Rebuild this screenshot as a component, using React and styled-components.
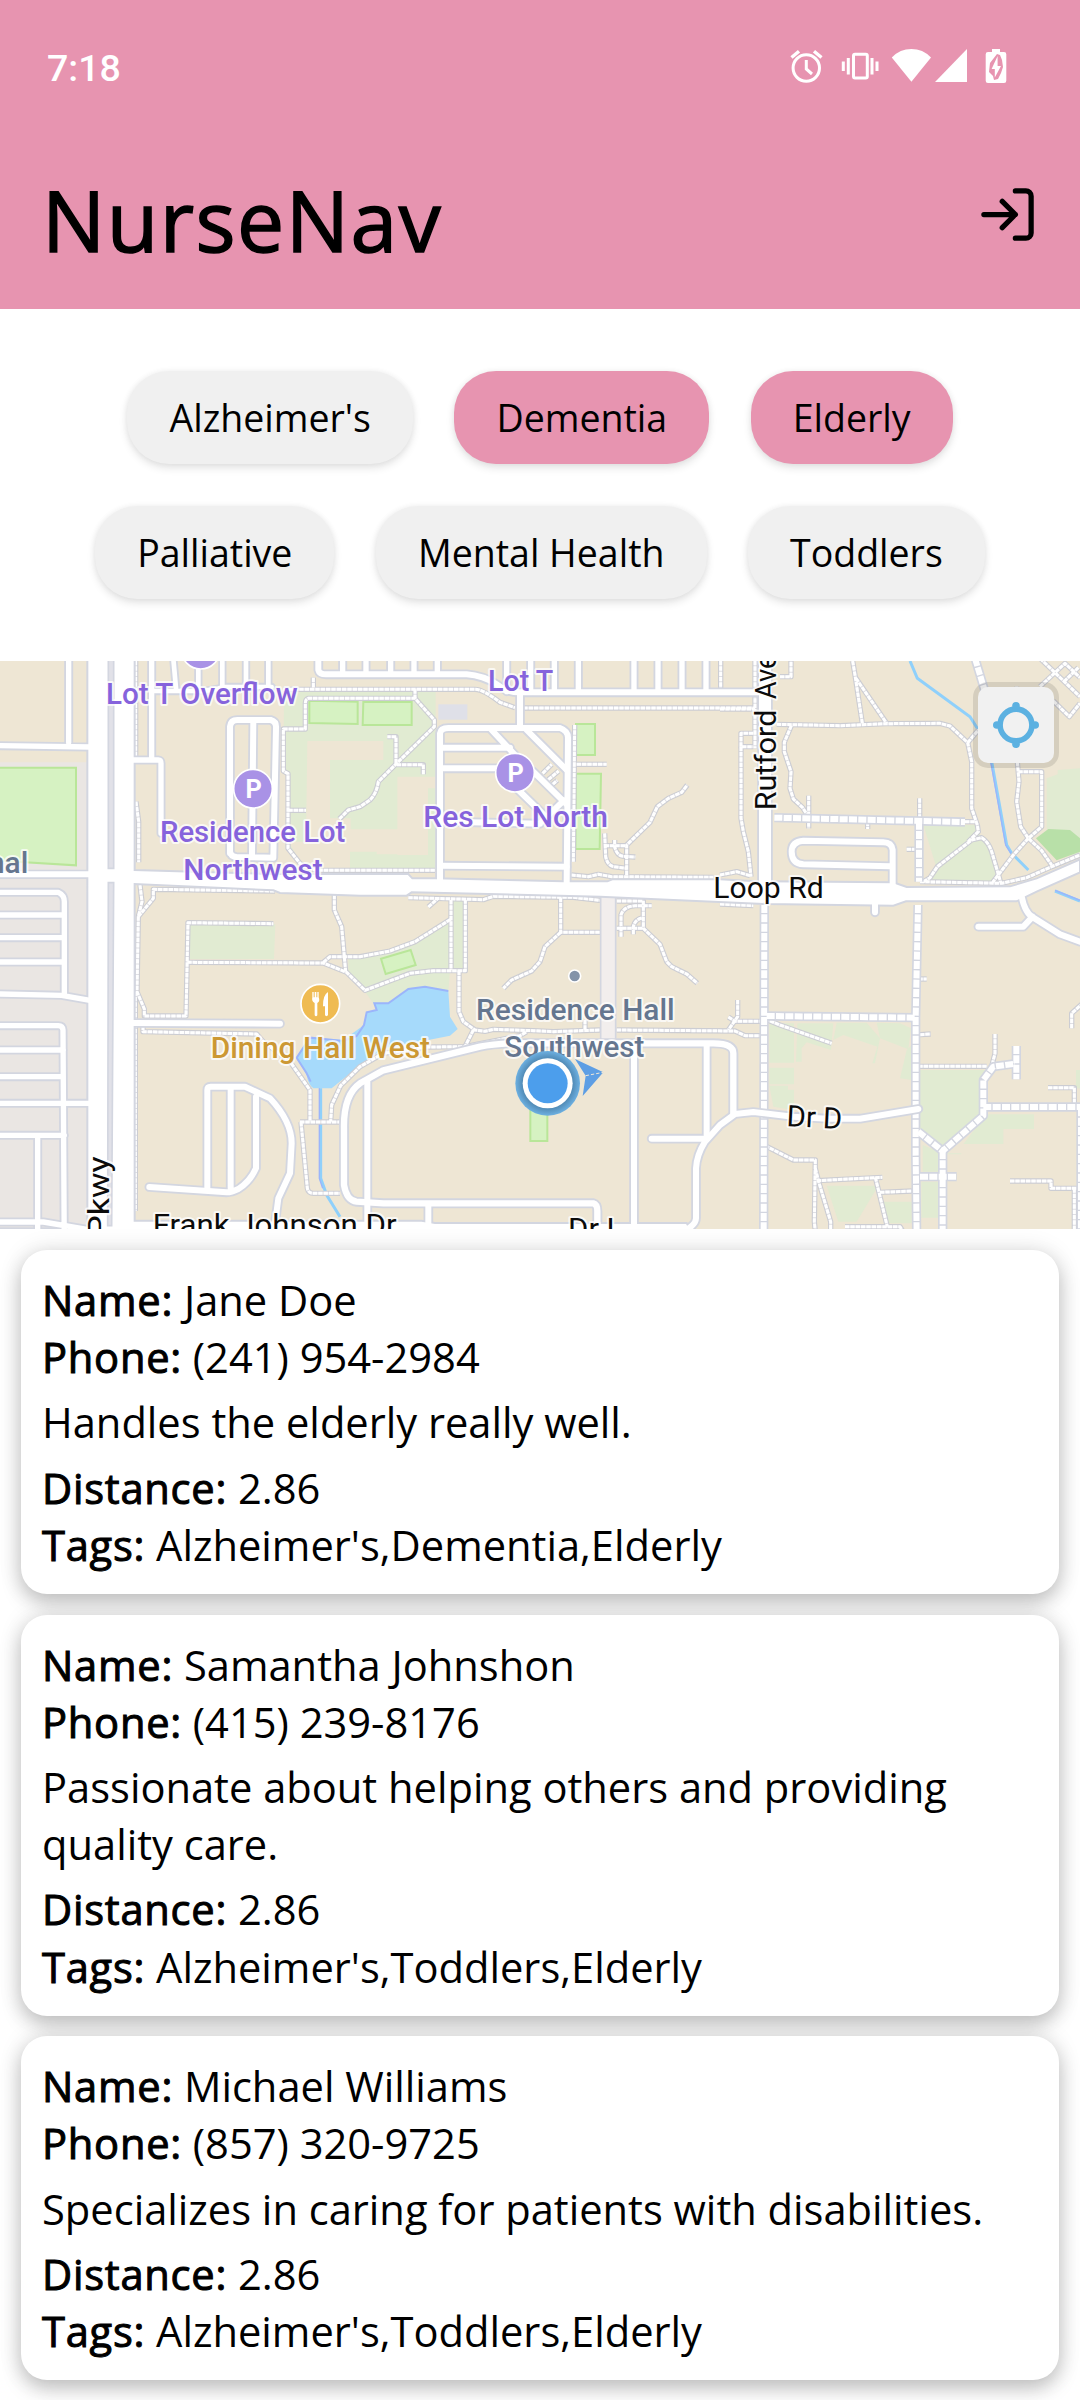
import React from 'react';
import styled, { createGlobalStyle } from 'styled-components';

const GlobalStyle = createGlobalStyle`
  * { box-sizing: border-box; }
  body { margin: 0; background: #fff; }
`;

const Screen = styled.main`
  width: 1080px;
  height: 2400px;
  overflow: hidden;
  display: flex;
  flex-direction: column;
  background: #fff;
  color: #000;
  font-family: 'Open Sans', 'Noto Sans', sans-serif;
`;

const Header = styled.header`
  height: 309px;
  flex: none;
  display: flex;
  flex-direction: column;
  background: #e794b0;
`;

const StatusBar = styled.div`
  height: 136px;
  display: flex;
  align-items: center;
  justify-content: space-between;
  padding: 0 72px 0 47px;
  color: #fff;
`;

const Clock = styled.time`
  font: 500 37.5px/44px Roboto, sans-serif;
`;

const StatusIcons = styled.svg`
  width: 220px;
  height: 40px;
  display: block;
  margin-top: -5px;
`;

const TitleRow = styled.div`
  flex: 1;
  display: flex;
  align-items: flex-start;
  justify-content: space-between;
  padding: 27px 41px 0 42px;
`;

const Title = styled.h1`
  margin: 0;
  font-size: 84px;
  line-height: 114px;
  font-weight: 400;
  letter-spacing: 1.5px;
  -webkit-text-stroke: 1.5px #000;
`;

const IconButton = styled.button`
  border: 0;
  padding: 0;
  margin-top: 20px;
  background: none;
  color: inherit;
  svg { display: block; }
`;

const Filters = styled.section`
  height: 352px;
  flex: none;
  display: flex;
  flex-direction: column;
  justify-content: center;
  padding-bottom: 1px;
  gap: 42px;
`;

const FilterRow = styled.div`
  display: flex;
  justify-content: center;
  gap: 41.5px;
`;

const Chip = styled.button`
  height: 93px;
  border: 0;
  border-radius: 42px;
  padding: 1px 42px 0;
  font: 400 37.5px/52px 'Open Sans', 'Noto Sans', sans-serif;
  color: #000;
  background: ${(p) => (p.$active ? '#e794b0' : '#f0f0f0')};
  box-shadow: 0 4px 8px rgba(0, 0, 0, 0.11), 0 0 6px rgba(0, 0, 0, 0.05);
`;

const MapPanel = styled.section`
  position: relative;
  height: 568px;
  flex: none;
  overflow: hidden;
`;

const MapDrawing = styled.svg`
  display: block;
  width: 1080px;
  height: 568px;
`;

const LocateButton = styled.button`
  position: absolute;
  top: 21px;
  right: 21px;
  width: 86px;
  height: 86px;
  padding: 0;
  border: 5px solid rgba(0, 0, 0, 0.1);
  border-radius: 15px;
  background: #f1f1f1;
  background-clip: padding-box;
  display: flex;
  align-items: center;
  justify-content: center;
`;

const NurseList = styled.section`
  display: flex;
  flex-direction: column;
  gap: 20.5px;
  padding: 21px;
`;

const Card = styled.article`
  padding: 21px;
  border-radius: 26px;
  background: #fff;
  font-size: 41.65px;
  line-height: 57.2px;
  box-shadow: 0 9px 20px rgba(0, 0, 0, 0.21), 0 0 24px rgba(0, 0, 0, 0.11);
`;

const Line = styled.div``;

const Label = styled.span`
  letter-spacing: 0.75px;
  -webkit-text-stroke: 1px #000;
`;

const Bio = styled.p`
  margin: 8px 0;
`;

const roads = [
  ['M206 0V262M0 272L270 276', 16],
  ['M455 0V315M398 315H475Q483 315 483 325V535', 16],
  ['M519 0L528 100M455 108H580Q640 108 670 96H815', 14],
  ['M595 0V100M667 0V95M738 0V92M805 0V92', 14],
  ['M955 0V45Q958 58 978 58H1400Q1450 62 1490 88Q1520 113 1560 112H2275', 18],
  ['M1028 0V55M1098 0V55M1172 0V55M1242 0V55M1312 -0V55', 16],
  ['M1520 0V110M1592 0V110M1663 0V110M1735 0V110M1902 0V110M1974 0V110M2046 0V110M2118 0V110', 16],
  ['M690 595V215Q692 195 712 195H812Q830 200 828 220L820 608L710 606Q692 605 690 590M760 195L756 600', 18],
  ['M1560 115V215M1320 690V235Q1322 219 1345 219H1680Q1705 228 1704 250L1700 690', 18],
  ['M1330 278H1530M1330 340H1500M1475 225L1545 300M1580 225L1700 345M1600 350L1700 448', 18],
  ['M1555 405L1630 478M1692 436L1625 500M1330 500L1620 506M1322 632L1700 635', 18],
  ['M0 712H175Q193 720 193 740V1015M0 780H190M0 848H190M0 921H190M0 1017L185 1021L270 1036', 16],
  ['M0 1112H175Q188 1112 189 1125L193 1800M0 1185H190M0 1265H190M0 1345H270M0 1441H193M113 1441V1800M0 1701H130L270 1725', 16],
  ['M398 1104L840 1106', 18],
  ['M622 1600V1305Q622 1295 632 1295H735L810 1330Q875 1400 875 1465L870 1555L835 1630L823 1720', 18],
  ['M692 1300V1600M768 1325V1540Q750 1580 715 1602Q695 1612 680 1612L448 1596', 18],
  ['M2200 1375V1195Q2200 1165 2140 1165H1600Q1500 1162 1440 1175L1150 1246L1080 1285Q1030 1320 1032 1420V1590Q1040 1637 1070 1640L1150 1645H1780Q1792 1648 1792 1668V1720', 19],
  ['M1102 1280V1740M1285 1650V1740M1902 1170V1740M2120 1170V1440M1955 1451H2120', 18],
  ['M2050 1730Q2088 1710 2088 1690V1540Q2090 1500 2115 1460L2160 1410L2205 1377L2260 1371L2380 1385L2480 1391H2580L2755 1362', 18],
  ['M2295 0V700', 36],
  ['M2678 700V585Q2675 562 2650 562L2410 557Q2375 560 2375 590Q2375 625 2410 628L2670 634M2625 740V772', 18],
  ['M3065 725Q3075 775 3100 788L3180 838L3240 860M2935 815H3070L3098 785', 18],
];

const promenades = [
  'M2293 750L2291 1740', 'M2754 750L2747 1090V1500L2750 1740', 'M2323 488L2895 501', 'M2757 500V680',
  'M2300 1083L2745 1088', 'M2755 1430L2828 1488L2950 1382V1275L2980 1235L3045 1226', 'M3049 1173V1273',
  'M2950 1356H3240', 'M2828 1488V1740', 'M2760 1565H2870', 'M3243 1360V1740', 'M2925 10L2955 110',
];

const footpaths = [
  'M407 18V310', 'M408 440L416 500V622', 'M406 1010V1668', 'M420 690L426 740L415 785L411 1010L433 1062V1083H558L564 803L820 806',
  'M415 785L460 730V703L825 708', 'M940 68V100', 'M850 103H1425Q1450 103 1500 142L1545 158', 'M1570 159H2265',
  'M1080 130H925Q916 132 916 145V222H850V348L864 356V580L900 625Q925 645 970 646H1305', 'M865 466H918',
  'M1018 492L1045 465L1080 455L1110 435Q1130 415 1135 380L1190 325L1303 215V195L1245 130H1080', 'M1245 103V130',
  'M1188 325V245H1162', 'M1190 329H1270V358', 'M1003 720V765L1025 815L1037 950',
  'M562 922L970 924L1040 952L1095 1006L1230 955L1300 947H1396V735', 'M970 922L990 905H1080L1170 888L1245 860L1352 793',
  'M1353 735V945', 'M1225 728L1450 734L1480 724L1720 727L1800 736', 'M1285 756L1312 732',
  'M1682 728V832H1800', 'M1682 832L1635 875L1620 920L1595 948L1535 975L1510 1000',
  'M1377 947V1070L1390 1100L1425 1125L1455 1129L1480 1123L1600 1127L1660 1130L1800 1125', 'M1420 1125L1395 1175L1280 1176',
  'M1395 1175L1560 1142L1580 1130', 'M1755 1095V1125', 'M1850 1125L2205 1128L2235 1142H2280', 'M2213 1035V1085L2185 1125', 'M2185 1086L2205 1099H2285',
  'M429 1112V1130L770 1137L790 1160L830 1190L870 1220L930 1305V1400', 'M1280 1176L1150 1195L1080 1235L1022 1292L995 1350L992 1400',
  'M900 1401H1020', 'M903 1401L922 1600Q925 1615 940 1615H1020',
  'M1724 210L1720 620', 'M1730 328H1820', 'M1714 660L1765 665L1795 658L1835 665L2140 667',
  'M1880 660V570L1950 502L1972 455L2005 430L2045 412L2062 390', 'M1814 535L1817 605Q1822 630 1840 635L1880 640', 'M1814 572H1880',
  'M1844 555V575Q1850 602 1870 604L1906 606', 'M1850 738H1930V820L1980 868L2000 920L2015 935L2060 957L2092 985',
  'M1850 820H1930', 'M1863 845V780Q1870 755 1905 752H1955', 'M1900 838V815Q1905 792 1930 788',
  'M1628 355L1655 328', 'M1645 374L1676 348', 'M1658 388L1672 376',
  'M2160 162H2262', 'M2265 18V280', 'M2162 18V100', 'M2340 65H2373V18', 'M2330 208L2520 212L2660 206L2820 205L2850 213L2903 263L2915 320V460L2932 510L2935 530L2905 560',
  'M2903 263L2935 225', 'M2558 18L2565 60L2587 205', 'M2568 70L2660 205', 'M2374 212L2353 262V290L2373 350L2370 400L2380 432L2408 458L2425 485',
  'M2426 422V520', 'M2603 500V522', 'M2759 430V490', 'M2895 500H2925', 'M2760 680L3005 685L3080 668L3155 635L3240 600',
  'M2770 680L2790 668L2812 635L2915 555L2945 548Q2965 560 2975 590L3002 682', 'M2720 583H2757', 'M2260 235H2223V275H2260',
  'M2223 275V490L2230 530L2245 590L2253 665', 'M2160 660L2210 650L2250 662', 'M2160 747L2260 752', 'M3052 320L3057 380L3050 440L3062 515L3085 550L3125 587L3155 630',
  'M3055 350H3125V515L3085 550L3040 600L2978 682', 'M3120 10L3240 125', 'M3120 95L3195 25L3240 68', 'M3192 80L3235 38', 'M3160 138L3208 185L3240 145', 'M3050 95V105',
  'M2295 1092L2340 1110L2495 1165', 'M2755 972H2780', 'M2760 1139L2792 1137', 'M2755 1234H2960', 'M2985 1137V1195L2975 1235',
  'M3215 1120V1075L3245 1048', 'M3144 1298H3223V1350', 'M2295 1472L2380 1515H2446L2443 1700L2447 1740', 'M2446 1540L2456 1580L2492 1700V1740',
  'M2450 1577L2647 1567', 'M2626 1567L2662 1715', 'M2640 1612L2740 1608', 'M2535 1715H2700L2712 1735', 'M3030 1578H3153V1600H3240', 'M3223 1600V1740',
];

const meadows = [
  'M852 110H1307V645H970Q925 645 900 620L865 575V355H850Z',
  'M570 808H826L822 912H570Z',
  'M1045 912H1080V900L1170 888L1350 800V945L1345 1010L1280 995L1220 1003L1160 1045H1120L1088 1000L1045 950Z',
  'M1357 735H1393V945H1357Z',
  'M2770 510H2925L2945 550L2980 600L2990 680H2780L2810 640Z',
  'M3140 370L3173 358V345L3240 340V600H3180L3140 520Z',
  'M2308 1105H2382V1223H2308ZM2308 1238H2382V1288H2308ZM2308 1292H2364V1304H2382V1366L2320 1355Z',
  'M2392 1105H2500L2493 1185L2420 1162L2405 1180V1220H2388Z',
  'M2510 1103H2600L2640 1150L2625 1225H2617L2632 1175L2530 1140L2500 1155Z',
  'M2630 1103L2700 1105L2733 1120L2725 1183L2640 1150Z', 'M2735 1170V1275L2700 1270L2720 1185Z',
  'M2760 1245H2960L2945 1260V1380L2828 1480L2760 1430Z', 'M2890 1467L2960 1378H3102V1422H3010V1467Z',
  'M2768 1470L2828 1495H2884V1498H2815V1550H2768ZM2764 1580H2815V1688H2764Z', 'M2480 1592H2635L2570 1700H2515Z',
  'M2650 1640H2735V1705H2665Z', 'M3228 1245H3240V1300H3228Z',
];

const clearings = 'M922 258H1150V315H990V490H1052V523H1192V365H1308V400H1284V600H1192V598H1130V590H1050V645H960Q925 645 900 620L866 560H918Z';

const labels = [
  { t: 'Lot T Overflow', x: 318, y: 147, w: 575, c: '#8663dc', b: 500 },
  { t: 'Lot T', x: 1464, y: 108, w: 196, c: '#8663dc', b: 500 },
  { t: 'Residence Lot', x: 480, y: 562, w: 556, c: '#8663dc', b: 500 },
  { t: 'Northwest', x: 550, y: 675, w: 418, c: '#8663dc', b: 500 },
  { t: 'Res Lot North', x: 1270, y: 516, w: 554, c: '#8663dc', b: 500 },
  { t: 'nal', x: -36, y: 653, w: 121, c: '#65768f', b: 500 },
  { t: 'Dining Hall West', x: 632, y: 1210, w: 658, c: '#cc9833', b: 500 },
  { t: 'Residence Hall', x: 1428, y: 1094, w: 596, c: '#65768f', b: 500 },
  { t: 'Southwest', x: 1513, y: 1206, w: 420, c: '#65768f', b: 500 },
  { t: 'Rutford', x: 2328, y: 466, w: 302, c: '#0b0b0b', r: -90 },
  { t: 'Ave', x: 2328, y: 133, w: 135, c: '#0b0b0b', r: -90 },
  { t: 'Loop Rd', x: 2140, y: 730, w: 331, c: '#0b0b0b' },
  { t: 'Dr D', x: 2359, y: 1413, w: 166, c: '#0b0b0b', r: 3 },
  { t: 'Pkwy', x: 328, y: 1745, w: 241, c: '#0b0b0b', r: -90 },
  { t: 'Frank Johnson Dr', x: 458, y: 1739, w: 732, c: '#0b0b0b' },
  { t: 'Dr L', x: 1704, y: 1751, w: 166, c: '#0b0b0b' },
];

const parking = [[759, 401], [1545, 353]];

function StatusGlyphs() {
  return (
    <StatusIcons viewBox="788 46 220 40">
      <g fill="none" stroke="#fff" strokeWidth="3">
        <circle cx="806.3" cy="68" r="13.2" />
        <path d="M806.3 60V69L812 74" />
        <path d="M791.5 57.5L799 51.2M821.5 57.5L814 51.2" strokeWidth="3.4" />
        <rect x="853.5" y="54.3" width="13.8" height="23.6" rx="1.5" />
        <path d="M848.3 58V74.5M872 58V74.5M843.3 61.5V71M877 61.5V71" />
      </g>
      <g fill="#fff">
        <path d="M911.4 81.8L891.8 57.4Q900 49 911.4 49T931 57.4Z" />
        <path d="M935 82L967 49V82Z" />
        <path fillRule="evenodd" d="M992 49h8v3h4q2.300 0 2.300 2.300v26.400q0 2.300-2.300 2.300h-16q-2.300 0-2.300-2.300V54.300q0-2.300 2.300-2.300h4ZM997 54l-7 9-1 9 4 4 1 4 4-1 3-6 2-6-1-7-2-5Z" />
        <path d="M997.600 56V66H1001L994.800 77.500V69H991.600Z" />
      </g>
    </StatusIcons>
  );
}

function LoginIcon() {
  return (
    <svg width="63" height="63" viewBox="0 0 24 24" fill="none" stroke="currentColor" strokeWidth="2" strokeLinecap="round" strokeLinejoin="round">
      <path d="M15 3h4a2 2 0 0 1 2 2v14a2 2 0 0 1-2 2h-4" />
      <path d="M10 17l5-5-5-5M15 12H3" />
    </svg>
  );
}

function CampusMap() {
  return (
    <MapDrawing viewBox="0 18 3240 1704" preserveAspectRatio="none">
      <defs>
        <radialGradient id="halo">
          <stop offset="0.76" stopColor="#5089b4" />
          <stop offset="1" stopColor="#6db0e1" />
        </radialGradient>
      </defs>
      <path d="M0 0H3240V1740H0Z" fill="#eee6d4" />
      <path d="M0 322H262V1740H0Z" fill="#eae6e3" />
      {meadows.map((d) => <path key={d} d={d} fill="#e1ebd2" />)}
      <path d={clearings} fill="#eee6d4" />
      <path d="M1315 148H1402V194H1315Z" fill="#dfe0e8" />
      <g fill="#d6f2c2" stroke="#b9e699" strokeWidth="6">
        <path d="M-5 338H228V631L-5 617Z" />
        <path d="M928 137L1073 140V207L928 204ZM1090 141H1235V210H1088ZM1728 207H1785V300H1728ZM1728 356H1803L1799 582H1726ZM1591 1360H1642V1458H1591Z" />
        <path d="M1143 911L1232 885L1247 930L1157 957Z" />
      </g>
      <path d="M3108 550L3145 522L3210 525L3240 550V590L3170 616Z" fill="#b8e0a8" />
      <path d="M890 1208L930 1148L1030 1155L1092 1110L1100 1072L1130 1065L1123 1045H1165L1225 1002L1275 995L1345 1008L1350 1085L1373 1122L1350 1142L1270 1158L1150 1180L1075 1235L995 1300H940Q925 1290 920 1260Z" fill="#a6dafb" />
      <g fill="none" stroke="#9bb5fb" strokeWidth="6">
        <path d="M932 1280L920 1255L890 1208L930 1148L1030 1158L1070 1143L1092 1110L1100 1072L1130 1065L1123 1045H1165L1225 1002L1275 995L1345 1008" />
        <path d="M2730 18L2752 70L2910 185L2935 225M2975 320L3020 570L3035 595L3085 645M3165 708L3240 738M962 1300V1570L980 1620L1020 1685" stroke="#8fd0fb" strokeWidth="9" />
        <path d="M2972 320L3017 570L3033 595M3165 706L3240 736M958 1300V1570L968 1600" strokeWidth="4" />
      </g>
      <g fill="none" strokeLinejoin="round">
        {footpaths.map((d) => <path key={d} d={d} stroke="#cccdd3" strokeWidth="16" />)}
        {footpaths.map((d) => <path key={d} d={d} stroke="#e0e0e5" strokeWidth="9" />)}
        {footpaths.map((d) => <path key={d} d={d} stroke="#fff" strokeWidth="9" strokeDasharray="13 3" />)}
        {promenades.map((d) => <path key={d} d={d} stroke="#d3d6e0" strokeWidth="28" />)}
        {promenades.map((d) => <path key={d} d={d} stroke="#fff" strokeWidth="18" strokeDasharray="24 4" />)}
      </g>
      <path d="M1802 722H1847V1160H1802Z" fill="#f2eeed" stroke="#d3d6e0" strokeWidth="5" />
      <g fill="none" strokeLinecap="round" strokeLinejoin="round">
        {roads.map(([d, w]) => <path key={d} d={d} stroke="#d3d6e0" strokeWidth={w + 11} />)}
        <path d="M0 658H270" stroke="#d3d6e0" strokeWidth="28" />
      </g>
      <path d="M404 0V645L820 657H1225L1237 670H1305L1690 679H1822L1837 673H2160L2270 679L2680 682L2720 696L3030 694L3110 670L3240 613V652L3110 710L3050 739H2718L2680 752L2300 747L1800 725L1235 712L1220 722H1080L840 714L820 706L404 687V1697H1265L1305 1704H2060L2080 1740H-10V1720H262V0Z" fill="#fff" stroke="#d3d6e0" strokeWidth="6" />
      <g fill="none" strokeLinecap="round" strokeLinejoin="round" stroke="#fff">
        {roads.map(([d, w]) => <path key={d} d={d} strokeWidth={w} />)}
        <path d="M0 658H270" strokeWidth="18" />
      </g>
      <path d="M325 0H341V640H325ZM325 683H341L335 1712H323Z" fill="#e1e1e8" stroke="#d3d6e0" strokeWidth="5" />
      <circle cx="602" cy="-16" r="58" fill="#a992e6" stroke="#fff" strokeWidth="5" />
      {parking.map(([x, y]) => (
        <g key={x}>
          <circle cx={x} cy={y} r="58" fill="#a992e6" stroke="#fff" strokeWidth="5" />
          <text x={x + 2} y={y + 27} textAnchor="middle" fill="#fff" fontFamily="Roboto, sans-serif" fontWeight="700" fontSize="76">P</text>
        </g>
      ))}
      <circle cx="961" cy="1046" r="58" fill="#efbb52" stroke="#fff" strokeWidth="5" />
      <g fill="#fff">
        <path d="M937 1011h4v16h3v-16h5v16h3v-16h4v16q5 12-4 17v37q-4 6-8 0v-37q-10-5-7-17Z" />
        <path d="M984 1011v70q-5 5-9 0v-27h-6q-1-33 15-43Z" />
      </g>
      <circle cx="1724" cy="963" r="18" fill="#8393a9" stroke="#fff" strokeWidth="5" />
      {labels.map(({ t, x, y, w, c, r, b }) => (
        <text
          key={t} x={x} y={y} textLength={w} lengthAdjust="spacingAndGlyphs"
          transform={r ? `rotate(${r} ${x} ${y})` : undefined}
          fontFamily="Roboto, sans-serif" fontSize="88" fontWeight={b || 400} fill={c}
          stroke="#fff" strokeOpacity="0.75" strokeWidth="12" strokeLinejoin="round" paintOrder="stroke"
        >{t}</text>
      ))}
      <path d="M1725 1212L1810 1252L1748 1323L1757 1262Z" fill="#5d9ee4" />
      <path d="M1757 1262L1810 1252" stroke="#f0e8d8" strokeWidth="3" strokeDasharray="10 6" />
      <circle cx="1643" cy="1285" r="97" fill="url(#halo)" />
      <circle cx="1643" cy="1285" r="75" fill="#fff" />
      <circle cx="1643" cy="1285" r="60" fill="#4c9eec" />
    </MapDrawing>
  );
}

function CrosshairIcon() {
  return (
    <svg width="46" height="46" viewBox="-23 -23 46 46" fill="#5cb1e1">
      <circle r="15.9" fill="none" stroke="#5cb1e1" strokeWidth="5.6" />
      <circle cy="-19.200" r="3.800" /><circle cy="19.200" r="3.800" />
      <circle cx="-19.200" r="3.800" /><circle cx="19.200" r="3.800" />
    </svg>
  );
}

const filterRows = [
  [['Alzheimer\'s', false], ['Dementia', true], ['Elderly', true]],
  [['Palliative', false], ['Mental Health', false], ['Toddlers', false]],
];

const nurses = [
  { name: 'Jane Doe', phone: '(241) 954-2984', bio: 'Handles the elderly really well.', distance: '2.86', tags: "Alzheimer's,Dementia,Elderly" },
  { name: 'Samantha Johnshon', phone: '(415) 239-8176', bio: 'Passionate about helping others and providing quality care.', distance: '2.86', tags: "Alzheimer's,Toddlers,Elderly" },
  { name: 'Michael Williams', phone: '(857) 320-9725', bio: 'Specializes in caring for patients with disabilities.', distance: '2.86', tags: "Alzheimer's,Toddlers,Elderly" },
];

function NurseCard({ nurse }) {
  return (
    <Card>
      <Line><Label>Name:</Label> {nurse.name}</Line>
      <Line><Label>Phone:</Label> {nurse.phone}</Line>
      <Bio>{nurse.bio}</Bio>
      <Line><Label>Distance:</Label> {nurse.distance}</Line>
      <Line><Label>Tags:</Label> {nurse.tags}</Line>
    </Card>
  );
}

export default function App() {
  return (
    <Screen>
      <GlobalStyle />
      <Header>
        <StatusBar>
          <Clock>7:18</Clock>
          <StatusGlyphs />
        </StatusBar>
        <TitleRow>
          <Title>NurseNav</Title>
          <IconButton aria-label="Log in"><LoginIcon /></IconButton>
        </TitleRow>
      </Header>
      <Filters>
        {filterRows.map((row, i) => (
          <FilterRow key={i}>
            {row.map(([name, active]) => <Chip key={name} $active={active}>{name}</Chip>)}
          </FilterRow>
        ))}
      </Filters>
      <MapPanel>
        <CampusMap />
        <LocateButton aria-label="Locate me"><CrosshairIcon /></LocateButton>
      </MapPanel>
      <NurseList>
        {nurses.map((nurse) => <NurseCard key={nurse.name} nurse={nurse} />)}
      </NurseList>
    </Screen>
  );
}
